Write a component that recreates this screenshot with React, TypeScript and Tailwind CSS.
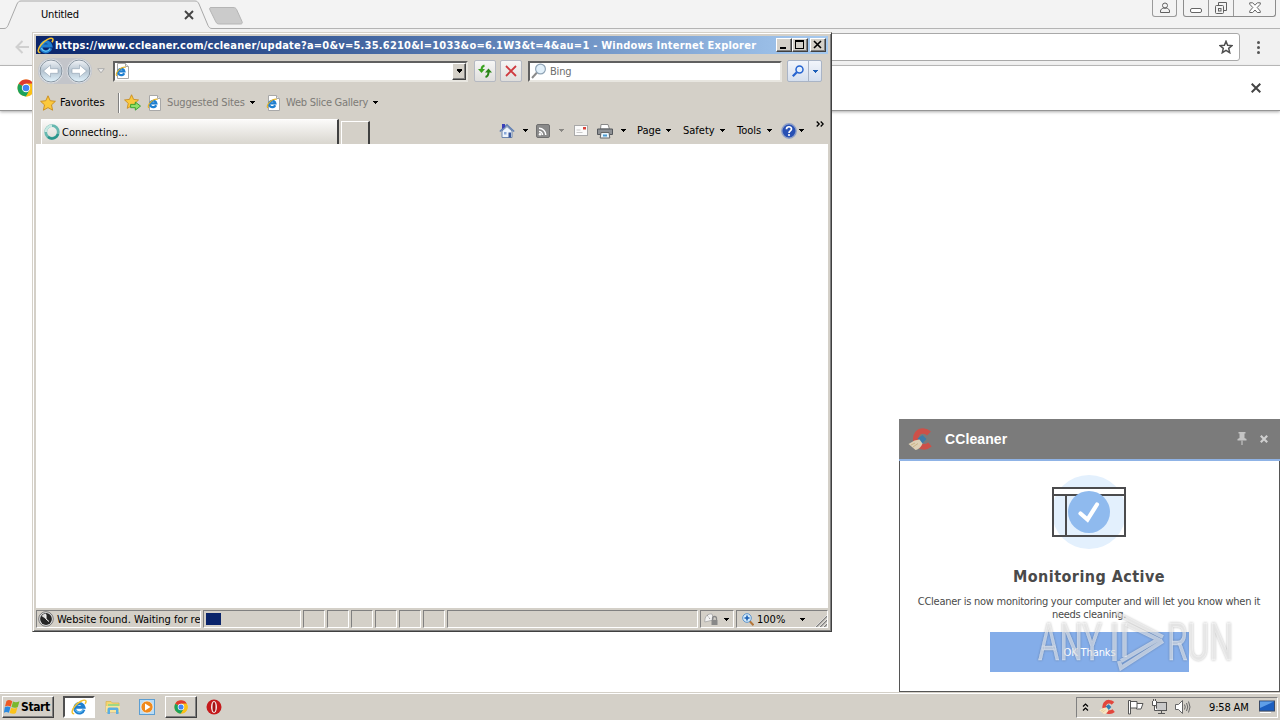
import type { ReactNode } from "react";
import clsx from "clsx";

const RAISED =
  "bg-[#d4d0c8] border border-t-white border-l-white border-r-[#404040] border-b-[#404040] shadow-[inset_-1px_-1px_0_#808080]";
const SUNKEN =
  "border border-t-[#808080] border-l-[#808080] border-r-white border-b-white";

const Caret = ({ className }: { className?: string }) => (
  <svg
    viewBox="0 0 5 3"
    shapeRendering="crispEdges"
    className={clsx("w-[5px] h-[3px] shrink-0", className)}
  >
    <path d="M0 0h5L2.5 3z" fill="currentColor" />
  </svg>
);

const IELogo = ({ className }: { className?: string }) => (
  <svg viewBox="0 0 16 16" className={clsx("shrink-0", className)}>
    <path
      d="M12.9 10.6A4.700 4.700 0 1 1 13 8.300H5"
      fill="none"
      stroke="#1f7fd0"
      strokeWidth="3"
    />
    <path
      d="M12.200 11A4.400 4.400 0 0 1 4.200 10.500"
      fill="none"
      stroke="#6fcbf7"
      strokeWidth="1"
    />
    <path
      d="M3.200 14.600C.2 15 .6 11 3.800 7.200 7.400 2.900 13 .2 14.600 1.500c.8.7.4 2-.5 3.400"
      fill="none"
      stroke="#f2c230"
      strokeWidth="1.500"
    />
  </svg>
);

const IEPage = ({ className }: { className?: string }) => (
  <svg viewBox="0 0 16 16" className={clsx("w-4 h-4 shrink-0", className)}>
    <path d="M2.5.5h8l3 3v12h-11z" fill="#fff" stroke="#a8a8a8" />
    <path d="M10.500.5v3h3" fill="#e6e6e6" stroke="#a8a8a8" />
    <path
      d="M9.200 10.200A3.200 3.200 0 1 1 9.400 8.400H4"
      fill="none"
      stroke="#1f7fd0"
      strokeWidth="2.200"
    />
    <path
      d="M2 12.700C.6 12.600 1.200 9.700 3.400 7.400 5.800 4.800 9.400 3.300 10.600 4.500"
      fill="none"
      stroke="#e2b22a"
      strokeWidth="1.200"
    />
  </svg>
);

const ChromeLogo = ({ className }: { className?: string }) => (
  <svg viewBox="0 0 18 18" className={clsx("shrink-0", className)}>
    <circle cx="9" cy="9" r="8.5" fill="#fbc116" />
    <path d="M9 9 1.640 4.750A8.500 8.500 0 0 1 16.400 4.750H9z" fill="#df3b2f" />
    <path d="M1.640 4.750A8.500 8.500 0 0 0 9 17.500L12.680 11.130 9 9z" fill="#1ba25c" />
    <path d="M9 4.750h7.400A8.500 8.500 0 0 1 9 17.500l3.700-6.400z" fill="#fbc116" />
    <circle cx="9" cy="9" r="4.200" fill="#fff" />
    <circle cx="9" cy="9" r="3.300" fill="#4285f4" />
  </svg>
);

const CCleanerLogo = ({ className }: { className?: string }) => (
  <svg viewBox="0 0 24 24" className={clsx("shrink-0", className)}>
    <path
      d="M21 6.500C18 3.500 12.500 3 9.500 6.500c-3 4-2 9.500 2 12 3.500 2 7.500 1.500 10.500-1"
      fill="none"
      stroke="#e2463c"
      strokeWidth="5.500"
    />
    <path d="M9.500 11.500 14.500 8l4 4-4.500 5z" fill="#2f7db5" />
    <path d="M.5 17 6.500 13.500l5-1 3 4c-1 3-4 6-7 6.500z" fill="#f7e6c4" />
    <path d="m3 18 4-2M5 20l5-3.500" stroke="#d8b878" strokeWidth=".8" />
  </svg>
);

const Star = () => (
  <path
    d="m8 .8 2.200 4.900 5.200.6-3.900 3.600 1.100 5.300L8 12.600l-4.600 2.600 1.100-5.300L.6 6.300l5.200-.6z"
    fill="#fbc93d"
    stroke="#c98a1a"
    strokeWidth=".9"
  />
);

const ChromeWindow = () => (
  <div className="absolute inset-x-0 top-0 h-[692px] bg-white">
    <div className="h-[29px] bg-[#f3f3f3] border-b border-[#b4b4b4] flex items-start">
      <div className="relative w-[250px] h-[29px] shrink-0">
        <svg viewBox="0 0 250 29" className="w-[250px] h-[29px]">
          <path
            d="M0 28.500h4c2 0 3-1 4-3L17 4c1-2 2-3 4-3h174c2 0 3 1 4 3l9 21.500c1 2 2 3 4 3V29H0z"
            fill="#f1f1f1"
          />
          <path
            d="M0 28.500h4c2 0 3-1 4-3L17 4c1-2 2-3 4-3h174c2 0 3 1 4 3l9 21.500c1 2 2 3 4 3h38"
            fill="none"
            stroke="#a9a9a9"
          />
          <path
            d="M211 7.500h22c2 0 3 .7 3.600 2l5.400 12c.7 1.700 0 2.500-1.500 2.500h-21c-2 0-3-.7-3.700-2.200L210 10c-.6-1.500-.6-2.500 1-2.500z"
            fill="#cbcbcb"
            stroke="#b5b5b5"
          />
          <path d="m185 11 8 8m0-8-8 8" stroke="#444" strokeWidth="1.900" />
        </svg>
        <span className="absolute left-[41px] top-2 leading-[14px] tracking-[-0.15px]">
          Untitled
        </span>
      </div>
      <div className="ml-auto mr-1 flex gap-[6px]">
        <div className="w-[25px] h-[17px] border border-t-0 border-[#9a9a9a] rounded-b-[3px] flex justify-center">
          <svg viewBox="0 0 12 12" className="w-3 h-3 mt-[2px]" fill="none" stroke="#606060">
            <circle cx="6" cy="3.500" r="2.500" />
            <path d="M1.500 10.500V9C1.500 7.500 3 6.500 4.300 6.200h3.400C9 6.500 10.500 7.500 10.500 9v1.500z" />
          </svg>
        </div>
        <div className="h-[17px] border border-t-0 border-[#8c8c8c] rounded-b-[3px] flex">
          <div className="w-[25px] border-r border-[#9a9a9a] flex justify-center">
            <div className="w-3 h-[5px] mt-2 border border-[#666] rounded-[2px] bg-white" />
          </div>
          <div className="w-[25px] border-r border-[#9a9a9a] flex justify-center">
            <svg viewBox="0 0 14 14" className="w-[14px] h-[14px] mt-px" fill="none" stroke="#606060">
              <path d="M4.500 4V1.500h8v8H10" />
              <rect x="1.500" y="4.500" width="8" height="8" rx="1" />
              <rect x="4.500" y="7.500" width="2.500" height="2.500" />
            </svg>
          </div>
          <div className="w-[41px] flex justify-center">
            <svg viewBox="0 0 12 12" className="w-3 h-3 mt-[2px]" fill="#fff" stroke="#666">
              <path d="M.7.800h3L6 3.200 8.300.8h3v1.400L8.200 5.500l3.100 3.600v1.400h-3L6 8l-2.300 2.500h-3V9.100l3.100-3.600L.7 2.200z" />
            </svg>
          </div>
        </div>
      </div>
    </div>
    <div className="h-[37px] bg-[#f1f1f1] border-b border-[#b8b8b8] flex items-center pl-[15px] pr-5">
      <svg viewBox="0 0 14 14" className="w-[14px] h-[14px]" fill="none" stroke="#d0d0d0" strokeWidth="2">
        <path d="M14 7H1.500M7.500 1l-6 6 6 6" />
      </svg>
      <div className="ml-[80px] flex-1 h-[28px] bg-white border border-[#a9a9a9] rounded-[3px] flex items-center justify-end pr-[6px]">
        <svg viewBox="0 0 14 14" className="w-[14px] h-[14px]" fill="none" stroke="#4f4f4f" strokeWidth="1.500">
          <path d="m7 1.300 1.600 3.900 4.400.4-3.300 2.800 1 4.300L7 10.400l-3.700 2.300 1-4.300L1 5.600l4.400-.4z" />
        </svg>
      </div>
      <div className="ml-[17px] flex flex-col gap-[2px]">
        <i className="size-[3px] rounded-full bg-[#555]" />
        <i className="size-[3px] rounded-full bg-[#555]" />
        <i className="size-[3px] rounded-full bg-[#555]" />
      </div>
    </div>
    <div className="h-[45px] bg-white border-b border-[#959595] shadow-[0_1px_3px_#aaa] flex items-center justify-between pl-[17px] pr-[19px]">
      <ChromeLogo className="w-[18px] h-[18px]" />
      <svg viewBox="0 0 10 10" className="w-[10px] h-[10px]" stroke="#444" strokeWidth="2">
        <path d="m.7.700 8.600 8.600m0-8.600L.7 9.300" />
      </svg>
    </div>
  </div>
);

const NavCircle = ({ flip }: { flip?: boolean }) => (
  <svg viewBox="0 0 26 26" className={clsx("w-[26px] h-[26px]", flip && "-scale-x-100")}>
    <defs>
      <linearGradient id="nav" x1="0" y1="0" x2="0" y2="1">
        <stop offset="0" stopColor="#f2f4f7" />
        <stop offset=".5" stopColor="#b4c3d0" />
        <stop offset="1" stopColor="#e2f3fc" />
      </linearGradient>
    </defs>
    <circle cx="13" cy="13" r="12.300" fill="#f4f5f7" stroke="#c4c8ce" strokeWidth=".8" />
    <circle cx="13" cy="13" r="11" fill="url(#nav)" stroke="#7d8a96" strokeWidth=".9" />
    <path d="M5.500 13l7-6v3.700h7.500v4.600h-7.500V19z" fill="#fff" stroke="#8ea0b0" strokeWidth=".6" />
  </svg>
);

const Chip = ({ children }: { children: ReactNode }) => (
  <div className="w-[22px] h-[22px] border border-[#b5b9c2] rounded-[2px] bg-linear-to-b from-[#f6f6f5] to-[#dfdedc] flex items-center justify-center">
    {children}
  </div>
);

const CaptionButton = ({ children }: { children: ReactNode }) => (
  <div className={clsx(RAISED, "w-4 h-[14px]")}>
    <svg viewBox="0 0 14 12" className="w-[14px] h-3" shapeRendering="crispEdges" fill="none" stroke="#000">
      {children}
    </svg>
  </div>
);

const MenuItem = ({ label, className }: { label: string; className?: string }) => (
  <div className={clsx("flex items-center justify-between", className)}>
    <span>{label}</span>
    <Caret />
  </div>
);

const StatusBar = () => (
  <div className="h-[21px] bg-[#d4d0c8] flex gap-[2px] pt-[2px] pb-px">
    <div className={clsx(SUNKEN, "w-[165px] flex items-center overflow-hidden whitespace-nowrap")}>
      <svg viewBox="0 0 16 16" className="w-4 h-4 ml-px mr-[4px] shrink-0">
        <circle cx="8" cy="8" r="7.300" fill="#e8e8e8" stroke="#777" />
        <circle cx="8" cy="8" r="5.900" fill="#262626" />
        <path d="M8 8V2.500A5.500 5.500 0 0 0 3.500 5z" fill="#ddd" />
        <path d="M8 3.500V8l3 2.500" stroke="#fff" fill="none" />
      </svg>
      <span className="-ml-px pt-px tracking-[-0.02px]">Website found. Waiting for re</span>
    </div>
    <div className={clsx(SUNKEN, "w-[98px] flex items-center")}>
      <div className="ml-[2px] w-[15px] h-3 bg-[#0a246a]" />
    </div>
    {[0, 1, 2, 3, 4, 5].map((i) => (
      <div key={i} className={clsx(SUNKEN, "w-[22px]")} />
    ))}
    <div className={clsx(SUNKEN, "flex-1")} />
    <div className={clsx(SUNKEN, "w-[34px] flex items-center justify-between pl-[3px] pr-[4px]")}>
      <svg viewBox="0 0 15 14" className="w-[15px] h-[14px]">
        <path d="M.8 10C.500 4 4 1.500 8 2l2 6-3 .5z" fill="#f4f4f4" stroke="#a5a5a5" strokeWidth=".8" />
        <path d="m3 3 3 4" stroke="#888" strokeDasharray="1 1" />
        <path d="M8.500 8V6.500a2 2 0 0 1 4 0V8" fill="none" stroke="#888" strokeWidth="1.300" />
        <rect x="7.500" y="8" width="6" height="5" fill="#888" />
      </svg>
      <Caret />
    </div>
    <div className={clsx(SUNKEN, "w-[92px] flex items-center pl-[5px] relative")}>
      <svg viewBox="0 0 12 13" className="w-3 h-[13px]">
        <path d="m7.500 8 4 4.300" stroke="#b4763a" strokeWidth="2" />
        <circle cx="5" cy="5" r="4.300" fill="#d6ecfb" stroke="#5b93cc" />
        <path d="M5 2.500v5M2.500 5h5" stroke="#1b5fb4" strokeWidth="1.600" />
      </svg>
      <span className="ml-[3px] pt-px">100%</span>
      <Caret className="ml-[15px]" />
      <svg viewBox="0 0 12 12" className="absolute right-0 bottom-0 w-3 h-3">
        <path d="M1 12 12 1M5 12l7-7M9 12l3-3" stroke="#808080" strokeWidth="1.400" />
        <path d="M0 12 12 0M4 12l8-8M8 12l4-4" stroke="#fff" strokeWidth=".6" />
      </svg>
    </div>
  </div>
);

const ExplorerWindow = () => (
  <div className="absolute left-8 top-8 w-[800px] h-[600px] bg-[#d4d0c8] border border-t-[#d4d0c8] border-l-[#d4d0c8] border-r-[#404040] border-b-[#404040] shadow-[inset_1px_1px_0_#fff,inset_-1px_-1px_0_#808080] pt-[3px] px-[3px] flex flex-col">
    {/* title bar */}
    <div className="h-[18px] bg-linear-to-r from-[#0a246a] to-[#a6caf0] flex items-center text-white font-bold whitespace-nowrap">
      <IELogo className="w-[17px] h-[17px] ml-px" />
      <span className="ml-px pt-px tracking-[0.22px]">
        https://www.ccleaner.com/ccleaner/update?a=0&amp;v=5.35.6210&amp;l=1033&amp;o=6.1W3&amp;t=4&amp;au=1 - Windows Internet Explorer
      </span>
      <div className="ml-auto mr-[2px] flex">
        <CaptionButton>
          <path d="M3 9h6" strokeWidth="2" />
        </CaptionButton>
        <CaptionButton>
          <path d="M2.500 2v7.500h8V2M2 2h9" />
          <path d="M2 2h9" strokeWidth="2" />
        </CaptionButton>
        <div className="ml-[2px]">
          <CaptionButton>
            <path d="m3 2 7 7m0-7-7 7" strokeWidth="1.600" shapeRendering="auto" />
          </CaptionButton>
        </div>
      </div>
    </div>

    {/* address row */}
    <div className="h-[34px] flex items-center">
      <div className="ml-[2px] flex gap-[2px] bg-[#c3c5ca] rounded-full">
        <NavCircle />
        <NavCircle flip />
      </div>
      <svg viewBox="0 0 8 6" className="w-2 h-[6px] ml-[5px]">
        <path d="M.7.700h6.600L4 4.800z" fill="#eee" stroke="#aaa" />
      </svg>
      <div className="ml-2 w-[355px] h-[21px] bg-white border-2 border-t-[#606060] border-l-[#606060] border-r-[#e8e6e0] border-b-[#e8e6e0] flex items-center justify-between">
        <IEPage />
        <div className={clsx(RAISED, "w-[14px] h-[17px] flex items-center justify-center")}>
          <Caret className="w-[7px] h-[4px]" />
        </div>
      </div>
      <div className="ml-[6px] flex gap-[4px]">
        <Chip>
          <svg viewBox="0 0 14 14" className="w-[14px] h-[14px]" fill="none" stroke="#3aa21f" strokeWidth="2">
            <path d="M6.500 1.500C4.500 2 3.500 3.500 3.500 6" />
            <path d="m0 5 3.500 4L7 5z" fill="#3aa21f" stroke="none" />
            <path d="M7.500 13c2.500-.5 3-2.500 3-5" stroke="#2a8418" />
            <path d="m7 8.500 3.500-4 3.500 4z" fill="#2a8418" stroke="none" />
          </svg>
        </Chip>
        <Chip>
          <svg viewBox="0 0 12 12" className="w-3 h-3" stroke="#cf3a3f" strokeWidth="1.800">
            <path d="m1 1 10 10m0-10L1 11" />
          </svg>
        </Chip>
      </div>
      <div className="ml-[6px] w-[254px] h-[21px] bg-white border-2 border-t-[#606060] border-l-[#606060] border-r-[#e8e6e0] border-b-[#e8e6e0] flex items-center text-[#6d6d6d]">
        <svg viewBox="0 0 16 16" className="w-4 h-4 ml-px mr-[3px]">
          <path d="m1 15 5-5.500" stroke="#8a8a8a" strokeWidth="2" />
          <circle cx="9.500" cy="6" r="4.900" fill="#e2f0fa" stroke="#8fa3b5" strokeWidth="1.200" />
        </svg>
        <span className="pt-[2px] tracking-[-0.2px]">Bing</span>
      </div>
      <div className="ml-[5px] w-[35px] h-[22px] border border-[#a9b4c6] rounded-[2px] bg-linear-to-b from-[#f2f5fb] to-[#d5dfee] flex">
        <div className="w-[21px] border-r border-[#a9b4c6] flex items-center justify-center">
          <svg viewBox="0 0 12 12" className="w-3 h-3" fill="none" stroke="#2563d0">
            <path d="m.8 11.200 4-4" strokeWidth="2.200" />
            <circle cx="7.500" cy="4.500" r="3.500" fill="#e4effc" strokeWidth="1.500" />
          </svg>
        </div>
        <div className="flex-1 flex items-center justify-center text-[#1d5fb8]">
          <Caret />
        </div>
      </div>
    </div>

    {/* favorites bar */}
    <div className="h-[29px] flex items-center text-[#7d7b77] whitespace-nowrap">
      <svg viewBox="0 0 16 16" className="w-4 h-4 ml-1">
        <Star />
      </svg>
      <span className="ml-[4px] w-[58px] text-black">Favorites</span>
      <div className="w-[2px] h-5 border-l border-[#808080] border-r border-r-white" />
      <svg viewBox="0 0 18 18" className="w-[17px] h-[17px] ml-[4px]">
        <Star />
        <path d="M7 11h5V8.500l5.500 4.300-5.500 4.300v-2.600H7z" fill="#8fe06a" stroke="#2b9a2b" strokeWidth=".9" />
      </svg>
      <IEPage className="ml-[6px]" />
      <span className="ml-[4px] w-[83px] pt-px tracking-[-0.15px]">Suggested Sites</span>
      <Caret className="text-black" />
      <IEPage className="ml-[11px]" />
      <span className="ml-[4px] w-[87px] pt-px tracking-[-0.25px]">Web Slice Gallery</span>
      <Caret className="text-black" />
    </div>

    {/* tabs + command bar */}
    <div className="h-[27px] flex items-end whitespace-nowrap">
      <div className="ml-[5px] w-[298px] h-[25px] border-t border-l border-white border-r-2 border-r-[#404040] bg-linear-to-b from-[#fbfaf9] to-[#d9d6cf] flex items-center">
        <svg viewBox="0 0 16 16" className="w-4 h-4 ml-[2px]" fill="none">
          <circle cx="8" cy="8" r="6.300" stroke="#67b8b0" strokeWidth="2.800" />
          <path d="M1.700 8A6.300 6.300 0 0 1 8 1.700" stroke="#c8e8e2" strokeWidth="2.400" />
          <path d="M4 13a6.300 6.300 0 0 0 10-3" stroke="#2b958c" strokeWidth="2.400" />
        </svg>
        <span className="ml-[2px] pt-px">Connecting...</span>
      </div>
      <div className="ml-[2px] w-[29px] h-[23px] border-t border-l border-white border-r-2 border-r-[#404040]" />
      <div className="ml-[129px] h-[27px] flex-1 flex items-center">
        <svg viewBox="0 0 16 16" className="w-4 h-4">
          <path d="M3 8v6.500h10V8L8 3.500z" fill="#eef4fb" stroke="#6d86ad" />
          <path d="M.8 8.500 8 1.800l7.200 6.700" fill="none" stroke="#5f7fb5" strokeWidth="1.400" />
          <path d="M3 1h3v3l-3 2z" fill="#3a3fb8" />
          <path d="M9.500 9.500h2.500v5H9.500z" fill="#38569c" />
          <path d="M5 9h2.500v2.500H5z" fill="#8aa8d8" />
        </svg>
        <Caret className="ml-[8px]" />
        <svg viewBox="0 0 14 14" className="w-[14px] h-[14px] ml-[8px]">
          <rect x=".5" y=".5" width="13" height="13" rx="1.500" fill="#8a8a8a" stroke="#6f6f6f" />
          <path d="M3 7.500A3.500 3.500 0 0 1 6.500 11M3 4.200A6.800 6.800 0 0 1 9.800 11" fill="none" stroke="#fff" strokeWidth="1.500" />
          <circle cx="4" cy="10.200" r="1.200" fill="#fff" />
        </svg>
        <Caret className="ml-[9px] text-[#8a8884]" />
        <svg viewBox="0 0 14 11" className="w-[14px] h-[11px] ml-[10px]">
          <rect x=".5" y=".5" width="13" height="10" fill="#fbfbfb" stroke="#a9a9a9" />
          <path d="M9 2h3v2.500H9z" fill="#d9453b" />
          <path d="M2.500 5h4M2.500 7.500h6" stroke="#c9c9c9" />
        </svg>
        <svg viewBox="0 0 16 16" className="w-4 h-4 ml-[9px]">
          <path d="M4 1.500h7l1.500 4.500h-9z" fill="#fff" stroke="#888" />
          <path d="M.5 6h15v5.500H.5z" fill="#8d9094" stroke="#55585c" />
          <path d="M4 9.500h8l.8 5.500H3.200z" fill="#e9f4fb" stroke="#666" />
          <path d="M6 11.500h4v2H6z" fill="#4a9ad0" />
        </svg>
        <Caret className="ml-[8px]" />
        <MenuItem label="Page" className="ml-[11px] w-[34px]" />
        <MenuItem label="Safety" className="ml-[12px] w-[42px]" />
        <MenuItem label="Tools" className="ml-[12px] w-[35px]" />
        <svg viewBox="0 0 16 16" className="w-4 h-4 ml-[9px]">
          <circle cx="8" cy="8" r="7.200" fill="#2850b4" stroke="#8fa0c8" strokeWidth="1.400" />
          <path d="M5.500 6.200C5.500 3 10.500 3 10.500 6c0 2-2.500 1.800-2.500 4" fill="none" stroke="#fff" strokeWidth="1.700" />
          <circle cx="8" cy="12" r="1.100" fill="#fff" />
        </svg>
        <Caret className="ml-[2px]" />
        <svg viewBox="0 0 8 6" className="w-2 h-[6px] ml-[12px] mb-[13px]" fill="none" stroke="#000" strokeWidth="1.300">
          <path d="m.7.500 2.500 2.500L.7 5.500M4.700.500 7.200 3 4.700 5.500" />
        </svg>
      </div>
    </div>

    <div className="flex-1 bg-white" />
    <StatusBar />
    <div className="h-[2px]" />
  </div>
);

const Watermark = () => (
  <svg
    viewBox="0 0 210 70"
    className="absolute left-[1036px] top-[606px] w-[210px] h-[70px] drop-shadow-[0_0_1px_rgba(0,0,0,0.45)]"
    fill="#fff"
    fillOpacity=".55"
    stroke="#fff"
    strokeOpacity=".55"
    fontFamily="Roboto, sans-serif"
    fontSize="52"
  >
    <text x="2" y="54" strokeWidth=".4" textLength="64" lengthAdjust="spacingAndGlyphs">
      ANY
    </text>
    <path d="M78.500 17v38M88.500 17v34" fill="none" strokeWidth="4.500" />
    <path d="M80 7 127 31M90 18l32 15.500L85 55M127 35 85 62l-2-7" fill="none" strokeWidth="4" />
    <text x="131" y="54" strokeWidth=".4" textLength="66" lengthAdjust="spacingAndGlyphs">
      RUN
    </text>
  </svg>
);

const CCleanerPopup = () => (
  <div className="absolute left-[899px] top-[419px] w-[381px] h-[273px] bg-white border border-[#555] flex flex-col text-[#4a4a4a]">
    <div className="-mx-px -mt-px h-[42px] bg-[#7b7b7b] border-b-2 border-[#8fb3e6] flex items-center pl-[9px] pr-3">
      <CCleanerLogo className="w-6 h-6 opacity-80" />
      <span className="ml-[13px] text-white font-bold text-[14px] tracking-[0.1px] font-['Liberation_Sans',Arial,sans-serif]">
        CCleaner
      </span>
      <svg viewBox="0 0 10 14" className="ml-auto w-[10px] h-[14px]" fill="#c4c4c4">
        <path d="M1.500 0h7v1.500h-1V6L9.500 7v1.500h-9V7l2-1V1.500h-1z" />
        <path d="M4.400 8.500h1.200V13H4.400z" />
      </svg>
      <svg viewBox="0 0 8 8" className="ml-[13px] w-2 h-2" stroke="#cfcfcf" strokeWidth="2.200">
        <path d="m.8.800 6.400 6.400m0-6.400L.8 7.200" />
      </svg>
    </div>
    <svg viewBox="0 0 76 76" className="w-[76px] h-[76px] ml-[151px] mt-[13px] shrink-0">
      <circle cx="38" cy="38" r="37" fill="#e3f0fd" />
      <path d="M2 14h72v7H2z" fill="#fff" />
      <path d="M2 14h72v48H2zM2 21h72M15 21v41" fill="none" stroke="#4b4b4d" strokeWidth="2" />
      <circle cx="38" cy="38" r="21" fill="#8fbaee" />
      <path d="m29.500 39.500 7 6L46 30.500" fill="none" stroke="#fff" strokeWidth="4.200" strokeLinecap="round" />
    </svg>
    <h1 className="mt-[17px] -ml-px text-center text-[16px] leading-5 font-bold tracking-[0.45px]">
      Monitoring Active
    </h1>
    <p className="mt-[8px] -ml-px text-center leading-[13px] whitespace-nowrap tracking-[-0.26px]">
      CCleaner is now monitoring your computer and will let you know when it
      <br />
      needs cleaning.
    </p>
    <button className="mt-[11px] mx-auto w-[199px] h-10 pt-px shrink-0 bg-[#84ade9] text-white tracking-[-0.1px]">
      OK Thanks
    </button>
  </div>
);

const Taskbar = () => (
  <div className="absolute inset-x-0 bottom-0 h-7 bg-[#d4d0c8] border-t border-[#d4d0c8] shadow-[inset_0_1px_0_#fff] flex items-center pt-px pl-[2px] pr-[2px]">
    <div className={clsx(RAISED, "w-[52px] h-[22px] flex items-center text-[12px] font-bold")}>
      <svg viewBox="0 0 16 16" className="w-4 h-4 ml-px">
        <path d="M2.500 2C4.500.5 6 1 8.300 2.200L6.700 7.700C4.500 6.500 3 6.500 1 7.500z" fill="#ee5a24" />
        <path d="M9 2.600c2 1 4 1 6.500-.3L13.800 7.900c-2 1.200-4 1.200-6.300.2z" fill="#7ab82e" />
        <path d="M.8 8.300c2-1.200 3.500-1 5.700 0L4.900 13.800c-2-1-3.500-1-5 0z" fill="#2b8ae0" />
        <path d="M7.200 8.800c2 1 4 1 6.200-.2l-1.500 5.400c-2 1.200-4 1-6.300 0z" fill="#fbc31a" />
      </svg>
      <span className="ml-px tracking-[-0.4px]">Start</span>
    </div>
    <div className="ml-[9px] w-8 h-[22px] bg-white border-2 border-t-[#505050] border-l-[#505050] border-r-white border-b-white flex items-center justify-center">
      <IELogo className="w-4 h-4" />
    </div>
    <svg viewBox="0 0 16 16" className="w-4 h-4 ml-[10px]">
      <path d="M1 2.500h5l1.500 1.500H14v9H1z" fill="#f3d671" stroke="#d9b24a" strokeWidth=".7" />
      <path d="M3 5h11v3H3z" fill="#9fd884" />
      <path d="M1 7h14v6H1z" fill="#f7e49b" />
      <path d="M2.500 15V10.500c0-1.500 1-2 2-2h7c1 0 2 .5 2 2V15h-2.500v-4h-6v4z" fill="#5aaee2" />
    </svg>
    <svg viewBox="0 0 16 16" className="w-4 h-4 ml-[18px]">
      <rect x=".5" y=".5" width="15" height="15" fill="#b9dcf5" stroke="#5c9ed2" />
      <circle cx="8" cy="8" r="6" fill="#f08a1c" stroke="#fff" strokeWidth=".6" />
      <path d="M6 4.500 11.500 8 6 11.500z" fill="#fff" />
    </svg>
    <div className={clsx(RAISED, "ml-[10px] w-8 h-[22px] flex items-center justify-center")}>
      <ChromeLogo className="w-[14px] h-[14px]" />
    </div>
    <svg viewBox="0 0 16 16" className="w-4 h-4 ml-[9px]">
      <circle cx="8" cy="8" r="7.500" fill="#c51a1c" />
      <ellipse cx="8" cy="8" rx="3" ry="6" fill="#f5eaea" />
      <ellipse cx="8" cy="8" rx="1.500" ry="5" fill="#a31214" />
    </svg>
    <div className={clsx(SUNKEN, "ml-auto w-[202px] h-[21px] flex items-center pl-[5px]")}>
      <svg viewBox="0 0 6 8" className="w-[7px] h-[8px]" fill="none" stroke="#000" strokeWidth="1.200">
        <path d="M.5 3.500 3 1l2.500 2.500M.5 7.500 3 5l2.500 2.500" />
      </svg>
      <CCleanerLogo className="w-4 h-4 ml-[10px]" />
      <svg viewBox="0 0 17 16" className="w-[17px] h-4 ml-[12px]" fill="#fff" stroke="#555">
        <path d="M9.500 4.500h6.500l-2 5.500H9.500z" />
        <path d="M3.500 2.500H10V9H3.500z" />
        <path d="M1.500 1.500h2v13.500h-2z" />
      </svg>
      <svg viewBox="0 0 16 16" className="w-4 h-4 ml-[7px]" fill="#fff" stroke="#555">
        <rect x="5.500" y="3.500" width="10" height="8" fill="#c9c9c9" />
        <path d="M7 14.500h7M10.500 12v2" />
        <path d="M1.500 2v4.500h4V2M3.500 6.500v5h3M2.500 0v2M4.500 0v2" />
      </svg>
      <svg viewBox="0 0 17 16" className="w-[17px] h-4 ml-[7px]" fill="none" stroke="#666">
        <path d="M1.500 5.500h3l4-4v13l-4-4h-3z" fill="#fff" />
        <path d="M10.500 5.500q1.500 2.500 0 5M12.500 4q2.500 4 0 8M14.500 2.500q3 5.500 0 11" />
      </svg>
      <span className="ml-[18px] w-[42px] pt-px whitespace-nowrap tracking-[-0.15px]">9:58 AM</span>
      <svg viewBox="0 0 16 14" className="w-4 h-[14px] ml-[8px]">
        <rect x=".5" y="1" width="15" height="10" fill="#1c5fc0" stroke="#3a4a66" />
        <path d="M1 1.500h14L1 8z" fill="#5f9fe8" />
        <path d="M1 12.500h11" stroke="#fff" />
      </svg>
    </div>
  </div>
);

const App = () => (
  <div className="relative w-[1280px] h-[720px] overflow-hidden bg-white text-black text-[11px] leading-[14px] font-['DejaVu_Sans_Condensed','DejaVu_Sans',sans-serif]">
    <ChromeWindow />
    <ExplorerWindow />
    <CCleanerPopup />
    <Taskbar />
    <Watermark />
  </div>
);

export default App;
